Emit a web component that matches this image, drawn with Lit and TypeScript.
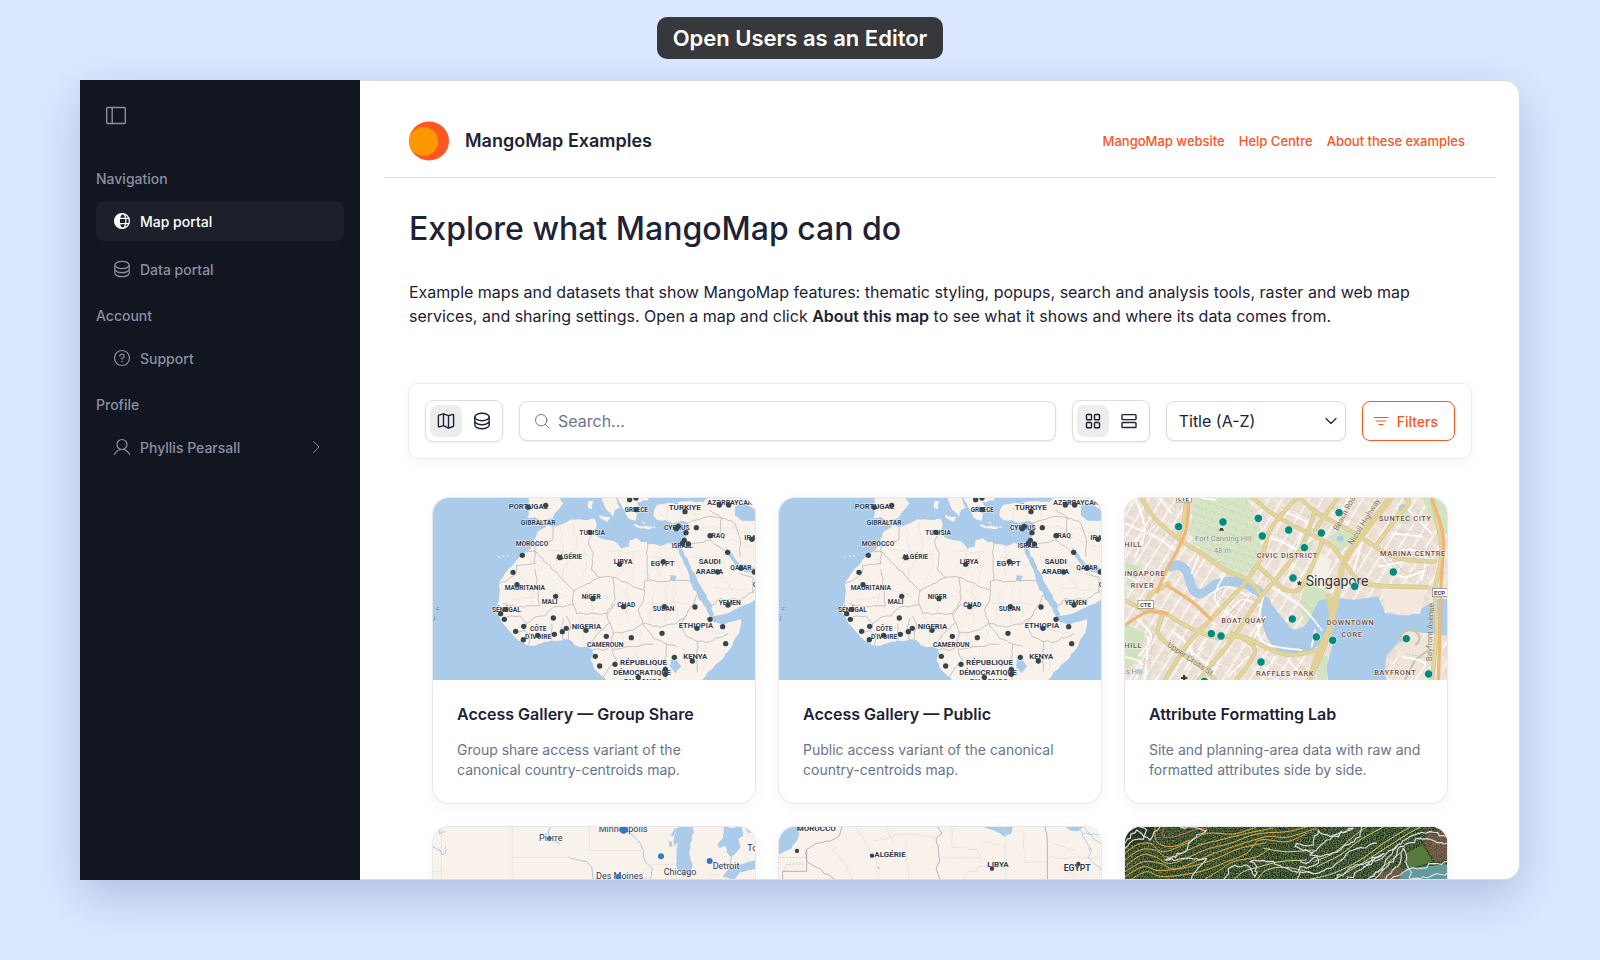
import { LitElement, html, css, svg, nothing } from "lit";
import { customElement, property, state } from "lit/decorators.js";
import { classMap } from "lit/directives/class-map.js";

/* ---------- geometry helpers ---------- */

type Pt = [number, number];

const parse = (s: string): Pt[] => s.trim().split(/\s+/).map((p) => p.split(",").map(Number) as Pt);

/** Subdivides a polyline and nudges the new points, so that coasts and borders look natural. */
function rough(s: string, amp = 3, closed = false, step = 10): string {
  const pts = parse(s);
  if (closed) pts.push(pts[0]);
  let seed = pts.length * 37 + pts[0][0] * 13 + pts[0][1];
  const rnd = () => {
    seed = (seed * 9301 + 49297) % 233280;
    return seed / 233280 - 0.5;
  };
  const out: string[] = [];
  for (let i = 0; i < pts.length - 1; i++) {
    const [x0, y0] = pts[i];
    const [x1, y1] = pts[i + 1];
    out.push(`${x0},${y0}`);
    const n = Math.floor(Math.hypot(x1 - x0, y1 - y0) / step);
    for (let k = 1; k < n; k++) {
      const t = k / n;
      out.push(`${(x0 + (x1 - x0) * t + rnd() * amp * 2).toFixed(1)},${(y0 + (y1 - y0) * t + rnd() * amp * 2).toFixed(1)}`);
    }
  }
  if (!closed) out.push(pts[pts.length - 1].join(","));
  return "M" + out.join("L") + (closed ? "Z" : "");
}

/** Smooth curve through the given points. */
function curve(s: string): string {
  const p = parse(s);
  let d = `M${p[0]}`;
  for (let i = 0; i < p.length - 1; i++) {
    const a = p[Math.max(i - 1, 0)], b = p[i], c = p[i + 1], e = p[Math.min(i + 2, p.length - 1)];
    d += `C${b[0] + (c[0] - a[0]) / 6},${b[1] + (c[1] - a[1]) / 6} ${c[0] - (e[0] - b[0]) / 6},${c[1] - (e[1] - b[1]) / 6} ${c[0]},${c[1]}`;
  }
  return d;
}

/* ---------- icons ---------- */

const icons = {
  panel: svg`<rect x=".7" y="3.500" width="18.600" height="16" rx="1"/><path d="M6.200 3.500v16"/>`,
  globe: svg`<circle cx="10" cy="10" r="7.4"/><ellipse cx="10.6" cy="10" rx="3.3" ry="7.4"/><path d="M7 7.4h10M7 12.6h10"/><path fill="currentColor" stroke="none" d="M10 2.4a7.6 7.6 0 0 0 0 15.2C6.4 14 6.4 6 10 2.4z"/>`,
  database: svg`<ellipse cx="10" cy="6" rx="7.2" ry="3.7"/><path d="M2.8 6v4c0 2 3.2 3.7 7.2 3.7s7.200-1.700 7.200-3.700V6M2.800 10v4c0 2 3.200 3.700 7.200 3.700s7.200-1.700 7.200-3.700v-4"/>`,
  help: svg`<circle cx="10" cy="10" r="7.500"/><path d="M7.800 8.200c0-1.200 1-2 2.200-2s2.200.8 2.200 2c0 1.100-.9 1.800-2.200 2v1.100"/><circle cx="10" cy="13.600" r=".6" fill="currentColor" stroke-width=".4"/>`,
  user: svg`<circle cx="10" cy="7.500" r="5"/><path d="M2.300 17.500c1.600-3 4.400-5 7.700-5s6.100 2 7.700 5"/>`,
  right: svg`<path d="M7.500 4.500l5.500 5.500-5.500 5.500"/>`,
  down: svg`<path d="M5 7.500l5 5 5-5"/>`,
  map: svg`<path d="M7.500 14.600l-4.300 1.300a.6.6 0 0 1-.8-.6V4.900c0-.3.200-.6.500-.7L7.500 2.800l5 1.900 4.300-1.300c.4-.1.800.2.800.6v10.800c0 .3-.2.600-.5.700l-4.600 1.700zM7.500 2.800v11.800M12.500 4.700v12.400"/>`,
  search: svg`<circle cx="9.200" cy="9.200" r="5.700"/><path d="M13.300 13.300l3.700 3.700"/>`,
  grid: svg`<rect x="3.500" y="3.500" width="5" height="5.200" rx=".8"/><rect x="11.500" y="3.500" width="5" height="5.200" rx=".8"/><rect x="3.500" y="11.500" width="5" height="5.200" rx=".8"/><rect x="11.500" y="11.500" width="5" height="5.200" rx=".8"/>`,
  rows: svg`<rect x="3" y="3.600" width="14" height="5" rx=".8"/><rect x="3" y="11.500" width="14" height="5" rx=".8"/>`,
  filter: svg`<path d="M3 6.500h14M5.300 10h9.400M8 13.500h4"/>`,
};

const icon = (name: keyof typeof icons, width = 1.2, size = 20) => svg`
  <svg class="icon" viewBox="0 0 ${size} ${size}" width=${size} height=${size}
    fill="none" stroke="currentColor" stroke-width=${width} stroke-linecap="round" stroke-linejoin="round" aria-hidden="true">${icons[name]}</svg>`;

/* ---------- map drawings ---------- */

const label = (x: number, y: number, size: number, text: string, weight = 700) =>
  svg`<text class="country" x=${x} y=${y} font-size=${size} font-weight=${weight}>${text}</text>`;

const dots = (s: string, r: number, fill: string, ring = 0) =>
  parse(s).map(([x, y]) => svg`<circle cx=${x} cy=${y} r=${r} fill=${fill} stroke="#fff" stroke-width=${ring}/>`);

const lines = (list: string[], amp: number) => list.map((s) => rough(s, amp)).join("");

const africaLand = [
  // African mainland
  "384,104 398,112 425,103 455,88 490,90 526,88 530,103 521,122 535,142 562,150 592,160 604,176 628,170 630,150 650,144 664,156 700,162 722,168 745,158 768,166 778,192 790,214 804,245 812,280 832,315 850,345 868,375 880,396 915,402 962,388 960,418 938,465 902,512 862,548 840,575 560,575 546,558 520,532 512,512 520,492 516,478 500,470 482,472 464,466 450,450 430,447 410,453 385,455 355,462 330,467 310,458 285,442 266,420 250,402 240,384 226,358 236,335 240,300 236,283 250,260 268,234 290,210 312,190 335,172 343,148 352,125",
  // Levant, Arabia and Iran
  "702,60 712,44 745,38 790,34 870,22 1010,22 1010,328 960,352 905,374 880,378 876,346 852,306 832,272 812,228 790,184 782,166 796,148 800,120 803,98 786,92 760,100 735,90 712,90 700,78",
  // Iberia
  "324,20 420,20 430,40 412,62 398,84 366,92 345,82 322,84 328,50",
  // Italy and Greece
  "545,20 580,20 600,52 585,60 580,82 560,60", "590,20 690,20 682,32 650,36 655,60 648,92 624,84 606,52",
  "536,74 572,82 562,96 540,84", "506,32 520,34 516,58 504,54", "640,104 700,112 690,118 650,112", "766,108 790,104 780,120",
];
const africaWater = [
  "916,172 928,182 940,196 960,222 986,226 1010,240 1010,250 975,246 946,226 924,194",
  "945,50 975,40 1010,60 1010,92 970,94 944,76", "715,20 865,20 850,36 800,32 745,36",
  "752,508 772,512 784,528 766,550 750,530", "752,255 770,258 765,272 750,270",
];
const africaBorders = [
  "400,112 398,150 345,165 345,184 320,186", "345,184 345,222 290,226 285,255 236,283", "345,184 460,300 462,305",
  "345,238 358,348 300,350 250,342", "521,122 505,155 520,190 515,240 540,262 578,262 670,300", "540,262 462,302 460,345 400,352 375,378 350,380",
  "682,155 682,272 672,274 672,330 655,360 668,400", "682,272 812,274", "578,262 585,330 560,370 470,372 460,345", "585,340 560,372 570,398 545,420 520,450 500,468",
  "570,398 580,430 640,420 668,400 720,412 770,400", "668,400 700,445 740,462 770,470", "580,430 572,470 580,478 630,470 700,462", "440,378 450,400 445,448",
  "430,385 425,410 428,447", "395,400 392,455", "350,380 320,400 312,420 330,440 326,466", "262,380 300,378 320,400", "280,430 312,420",
  "770,400 800,375 825,330 830,315", "800,375 780,400 800,440 832,455 870,455 925,430", "832,455 832,545", "740,462 735,520 740,575", "516,480 560,478 572,470",
  "575,478 590,510 560,545 550,560", "800,100 860,80 905,84 900,130 870,150 815,162", "870,150 920,185", "905,84 945,100 960,145 960,200", "876,346 900,325 960,330 1005,300",
  "870,60 905,84", "780,166 815,162", "960,250 1000,262 1000,310",
];
const africaRegions = [
  "420,110 430,180 400,240", "460,95 470,160 440,230 420,270", "490,180 500,230 480,270", "560,180 620,190 660,180", "600,190 610,240 590,260", "640,190 640,280",
  "700,200 760,210 780,240", "720,170 715,260", "380,180 460,190 510,200", "300,250 340,300 330,345", "370,300 440,320", "480,310 570,320", "500,290 520,370",
  "600,300 650,340 600,380", "620,280 625,400", "700,300 690,400", "740,280 735,400", "680,340 800,340", "760,290 770,380", "480,380 490,460", "520,380 525,440",
  "600,430 620,470", "660,420 665,465", "470,420 560,420", "590,500 720,510", "650,480 660,560", "790,470 800,540", "860,460 850,540", "830,420 910,430", "860,200 900,260 940,300",
  "820,200 900,210 930,250", "880,290 980,300", "830,110 890,115", "920,110 990,130", "930,150 1000,170", "740,50 745,95", "780,50 785,90", "820,45 830,90", "350,400 400,420", "270,330 340,325",
];

const africa = svg`
  <svg class="map" viewBox="39 24 966 546" preserveAspectRatio="xMidYMid slice" role="img" aria-label="Map of Africa">
    <rect x="39" y="24" width="966" height="546" fill="#abcbeb"/>
    <path d=${africaLand.map((s) => rough(s, 3, true)).join("")} fill="#f8f2ea"/>
    <path d=${africaWater.map((s) => rough(s, 2, true)).join("")} fill="#abcbeb"/>
    <path d=${lines(africaRegions, 5)} fill="none" stroke="#e4dfd9" stroke-width="2"/>
    <path d=${lines(africaBorders, 3)} fill="none" stroke="#b3b0b8" stroke-width="2.200"/>
    <path d="M700,110l6,3M690,108l5,6M668,96l6,4M235,200l4,2M248,198l5,2M262,196l4,3" stroke="#f8f2ea" stroke-width="4"/>
    <g fill="#3a70c4" font-size="17" font-style="italic"><text x="48" y="360">c</text><text x="40" y="389">)</text></g>
    ${label(266, 56, 23, "PORTUGAL")}${label(302, 104, 20, "GIBRALTAR")}${label(287, 168, 20, "MOROCCO")}${label(478, 134, 20, "TUNISIA")}
    ${label(408, 208, 20, "ALGÉRIE")}${label(581, 222, 21, "LIBYA")}${label(692, 229, 23, "EGYPT")}${label(614, 65, 19, "GREECE")}
    ${label(746, 61, 24, "TÜRKIYE")}${label(862, 45, 21, "AZƏRBAYCAN")}${label(732, 120, 20, "CYPRUS")}${label(869, 144, 20, "IRAQ")}
    ${label(755, 173, 19, "ISRAEL")}${label(973, 150, 22, "IRAN")}${label(836, 222, 23, "SAUDI")}${label(827, 252, 23, "ARABIA")}${label(931, 240, 20, "QATAR")}
    ${label(254, 299, 20, "MAURITANIA")}${label(365, 343, 20, "MALI")}${label(485, 327, 20, "NIGER")}${label(592, 351, 20, "CHAD")}
    ${label(698, 362, 20, "SUDAN")}${label(896, 344, 20, "YEMEN")}${label(216, 365, 20, "SÉNÉGAL")}${label(455, 418, 23, "NIGERIA")}
    ${label(330, 423, 20, "CÔTE")}${label(315, 448, 20, "D'IVOIRE")}${label(776, 413, 23, "ETHIOPIA")}${label(501, 472, 20, "CAMEROUN")}
    ${label(790, 506, 23, "KENYA")}${label(600, 525, 24, "RÉPUBLIQUE")}${label(580, 555, 23, "DÉMOCRATIQUE")}${label(612, 583, 23, "DU CONGO")}${label(998, 290, 20, "OMAN")}
    ${dots("325,52 377,46 629,29 648,24 649,59 795,65 898,45 926,45 775,109 769,116 829,113 798,128 510,127 870,137 793,151 787,160 805,162 996,148 307,196 420,203 923,187 730,215 599,223 893,246 963,235 1003,246 279,247 291,284 407,319 519,326 611,350 733,350 825,351 924,345 257,358 242,371 253,388 400,384 870,388 311,409 287,424 439,415 427,425 403,433 353,436 498,421 831,415 908,410 310,449 559,439 634,443 726,430 917,461 526,499 539,528 585,523 763,502 817,513 736,538 736,553 655,562", 8, "#36464f")}
  </svg>`;

const sgRoads = [
  "80,20 100,60 140,105 195,150 260,190 330,240 400,270 440,315", "215,20 205,100 190,140", "560,10 470,110 440,200 380,290 300,375 220,460 150,570",
  "410,20 470,70 540,110 640,160 690,220 720,260 770,285 940,292", "550,20 610,70 720,130 780,170", "830,20 760,110 690,210 670,280 650,400 620,490 580,580",
  "30,330 90,360 150,370 200,400 290,440 380,440 470,480 530,495 610,480", "600,60 560,170 480,270 430,330 350,450 250,570", "90,345 110,310 160,280", "670,20 600,120", "140,380 130,430 170,470 260,530 300,570",
  "620,160 560,290 510,300", "510,300 430,230", "780,170 840,90 880,40 870,20", "780,170 850,205 960,215", "950,20 980,180 960,300 965,420 950,575", "350,430 420,480 360,575",
];
const sgStreets = [
  "30,100 120,140 180,180", "60,20 90,120 60,200", "130,20 170,70", "40,260 130,310", "330,250 300,330 380,400", "250,340 330,290 400,320", "320,390 380,330 440,350", "430,130 510,160 560,190", "480,80 440,160",
  "560,130 530,230", "500,60 580,100 620,140", "640,60 700,100", "700,20 660,120", "740,160 710,260", "800,200 860,260 930,240", "790,230 870,215", "830,130 920,140", "860,180 930,190 920,270", "880,60 950,130",
  "170,420 230,480 210,540", "60,380 110,440 70,500", "100,440 90,570", "220,480 300,540", "300,400 250,480", "330,460 300,540", "400,500 340,560", "440,520 480,570", "520,510 560,560", "480,500 440,560", "450,300 430,400 450,460 560,480",
  "470,290 560,350 620,420", "600,420 590,470", "860,500 930,520 900,570", "30,500 80,520 60,570", "120,110 60,150", "250,200 230,250", "450,380 420,440", "240,20 300,30",
];
const place = (x: number, y: number, text: string, size = 22) => svg`<text class="place" x=${x} y=${y} font-size=${size}>${text}</text>`;

const singapore = svg`
  <svg class="map" viewBox="30 24 966 546" preserveAspectRatio="xMidYMid slice" role="img" aria-label="Map of Singapore">
    <defs>
      <pattern id="blocks" width="46" height="34" patternUnits="userSpaceOnUse" patternTransform="rotate(-58)">
        <rect width="46" height="34" fill="#f0e7dd"/><rect x="4" y="4" width="18" height="11" fill="#e8dcd3"/><rect x="26" y="3" width="15" height="20" fill="#e9ddd5"/><rect x="5" y="19" width="16" height="10" fill="#e9dcd3"/>
        <path d="M0 32h46" stroke="#fff" stroke-width="3"/><path d="M24 0v34" stroke="#cfbfae" stroke-width="1.500" stroke-dasharray="4 3"/>
      </pattern>
      <pattern id="trees" width="26" height="22" patternUnits="userSpaceOnUse" patternTransform="rotate(20)">
        <rect width="26" height="22" fill="#d6e6c6"/><path d="M2 8q8-8 14 0t10 6" fill="none" stroke="#c2b99b" stroke-width="2" stroke-dasharray="4 3"/><circle cx="18" cy="5" r="2.500" fill="#c2dbb0"/>
      </pattern>
    </defs>
    <rect x="30" y="24" width="966" height="546" fill="url(#blocks)"/>
    <path d=${rough("235,24 400,24 430,90 445,170 410,240 370,262 310,225 250,170 225,130", 4, true)} fill="url(#trees)"/>
    <path d="M640,140L700,110 725,150 670,185zM580,250l55,20-5,60-55,70-25,-50zM30,400l60,30-20,80-40,30zM610,490l30,10-5,70h-30zM920,24h76v110l-40-30zM840,60h50v40h-40zM560,170l35-20-10,40zM30,220l50,10-40,60z" fill="#d2e3c0"/>
    <path d="M600,180l50,30-25,90-50-30z" fill="#f6efe6"/>
    <g fill="#abcbeb">
      <path d=${curve("160,232 190,225 215,245 235,300 265,310 310,280 380,278 440,310") } fill="none" stroke="#abcbeb" stroke-width="28"/>
      <path d="M440,318q20-5 30,25l60,75q30,5 50-25l30-60 45-12 60,8 75-10 20,50 70,8 90-50h30v110l-90,-10q-40-10-60,30l-35,40q-10,40,0,75H640l-5-40 25-95-50,30q-80,50-140,0-40-60-30-139z"/>
      <path d="M850,55a14 12 0 1 0 28 0 14 12 0 1 0-28 0M665,140l18-5 4,16-18,6zM55,240l12,8-6,20z"/>
    </g>
    <path d="M800,298h130l-5,40-10,35-100-8z" fill="#f3e9df"/>
    <path d="M860,455a28 24 0 1 1 40 10l20-20 60-10v135H840z" fill="#efe5db"/>
    <path d="M860,455a28 24 0 1 1 40 10M870,570l30-60 40-30" fill="none" stroke="#c5c99f" stroke-width="6"/>
    <path d=${sgStreets.map(curve).join("")} fill="none" stroke="#fff" stroke-width="5" stroke-linecap="round"/>
    <path d=${lines(sgStreets.map((s) => parse(s).map(([x, y]) => `${x + 14},${y - 9}`).join(" ")), 3)} fill="none" stroke="#c8b7a4" stroke-width="2" stroke-dasharray="5 4"/>
    <path d=${sgRoads.map(curve).join("")} fill="none" stroke="#d3c289" stroke-width="13" stroke-linecap="round"/>
    <path d=${sgRoads.map(curve).join("")} fill="none" stroke="#e3d49b" stroke-width="10" stroke-linecap="round"/>
    <path d=${curve("640,310 650,400 610,490 580,580")} fill="none" stroke="#e1d196" stroke-width="18"/>
    <path d=${curve("830,20 760,110 690,210 665,320 645,410")} fill="none" stroke="#e1d196" stroke-width="20"/>
    <path d=${curve("222,24 210,130 150,250 125,310") + curve("30,405 100,365 160,372") + curve("950,24 985,140 978,280 975,420 970,575") + curve("155,285 230,335 290,390")} fill="none" stroke="#eeb878" stroke-width="10"/>
    <g fill="#fff" stroke="#7b7b78" stroke-width="2"><rect x="185" y="12" width="44" height="24"/><rect x="69" y="331" width="46" height="25"/><rect x="952" y="295" width="46" height="25"/></g>
    <g font-size="18" font-weight="700" fill="#444"><text x="189" y="32">CTE</text><text x="75" y="350">CTE</text><text x="957" y="314">ECP</text></g>
    ${place(28, 170, "HILL")}${place(28, 257, "INGAPORE")}${place(47, 293, "RIVER")}${place(425, 203, "CIVIC DISTRICT")}${place(792, 92, "SUNTEC CITY")}
    ${place(795, 198, "MARINA CENTRE")}${place(319, 398, "BOAT QUAY")}${place(635, 404, "DOWNTOWN")}${place(679, 440, "CORE")}${place(28, 474, "HILL")}${place(423, 557, "RAFFLES PARK")}${place(778, 556, "BAYFRONT")}
    <g class="soft" font-size="23"><text x="240" y="154">Fort Canning Hill</text><text x="296" y="188">48 m</text><text x="32" y="551">s Hill</text></g>
    <g class="road" font-size="24"><text transform="translate(712 166) rotate(-58)">Nicoll Highway</text><text transform="translate(668 124) rotate(-62)">Beach Road</text><text transform="translate(155 468) rotate(34)">Upper Cross St.</text><text transform="translate(950 514) rotate(-88)">Bayfront Avenue</text></g>
    <text class="city" x="572" y="287" font-size="42">Singapore</text>
    <path d="M553,271l2.500,5.500 6,.5-4.500,4 1.500,6-5.500-3-5.500,3 1.500-6-4.500-4 6-.5zM312,122l4-8h7l4,8zM198,561h6v-6h7v6h6v6h-6v6h-7v-6h-6z" fill="#3c3c3c"/>
    ${dots("191,110 324,96 430,85 442,138 521,120 619,129 672,68 568,173 534,264 719,289 835,246 532,387 289,431 318,438 604,441 653,451 874,446 438,516 941,552 268,574", 12.5, "#038a7c", 2)}
  </svg>`;

const midwest = svg`
  <svg class="map" viewBox="9 9 966 546" preserveAspectRatio="xMidYMid slice" role="img" aria-label="Map of the American Midwest">
    <rect x="9" y="9" width="966" height="546" fill="#f8f2ea"/>
    <path d="M34,9V300M9,142H34M247,9V300M247,100H415M478,9V79H634M660,121H750M600,165l60-4M830,152h50" fill="none" stroke="#ddd6d0" stroke-width="2" stroke-dasharray="4 2"/>
    <path d=${rough("362,9 355,30 370,48 390,58", 3) + rough("415,98 445,108 470,112 485,130 490,165 510,300", 3) + rough("590,22 625,50 640,80 642,105 668,135 665,155 640,200", 3) + rough("9,68 30,78 36,92 46,88 46,68", 3) + rough("30,9 28,30 44,22", 2) + rough("905,90 900,125", 1)} fill="none" stroke="#a9c8e8" stroke-width="3"/>
    <g fill="#abcbeb">
      <path d=${rough("745,9 788,9 792,24 780,60 778,90 788,120 782,150 760,160 742,135 740,90 742,55 730,70 735,30", 3, true)}/>
      <path d=${rough("880,9 935,9 940,35 925,45 932,70 915,90 903,100 890,85 885,65 868,72 862,62 878,45", 3, true)}/>
      <path d=${rough("900,130 945,118 975,108 975,135 930,145 915,165 878,158 885,148", 2, true)}/>
      <path d="M717,50l8,3 2,14-8,2zM722,35l12-22h6l-10,24zM944,9h31v14l-20,4zM682,36l6,3M893,120l12-2v12l-8,4z"/>
    </g>
    <g class="town" font-size="27"><text x="506" y="24">Minneapolis</text><text x="327" y="50">Pierre</text><text x="848" y="135">Detroit</text><text x="701" y="154">Chicago</text><text x="498" y="166">Des Moines</text><text x="952" y="80">Toronto</text></g>
    ${dots("581,18", 11, "#3377cb")}${dots("359,43", 6, "#3377cb")}${dots("693,97 839,111 565,159", 9, "#3377cb")}
  </svg>`;

const sahara = svg`
  <svg class="map" viewBox="9 9 966 546" preserveAspectRatio="xMidYMid slice" role="img" aria-label="Map of North Africa">
    <rect x="9" y="9" width="966" height="546" fill="#f8f2ea"/>
    <g fill="#abcbeb">
      <path d=${rough("5,5 72,5 68,40 45,75 5,94", 2, true)}/><path d=${rough("612,5 712,5 706,30 685,38 660,22", 2, true)}/><path d=${rough("858,5 928,5 905,22 880,18", 2, true)}/>
      <path d="M303,125l8,4-2,10zM937,70l5,4-1,12z"/>
    </g>
    <path d=${lines(["240,9 270,60 300,95", "300,95 310,200", "390,60 400,200", "150,60 200,110 230,165", "290,50 390,30 480,40", "525,9 530,70 600,75 620,110", "500,100 610,100", "560,200 570,150 640,120 688,110", "688,9 688,200", "740,20 745,115 812,115", "830,60 900,80", "818,100 970,100", "330,9 350,60", "620,50 690,70", "850,130 900,160", "30,122 80,118"], 4)} fill="none" stroke="#e2ddd6" stroke-width="2"/>
    <path d=${rough("198,9 190,35 160,52 120,58 92,76 92,110 175,165", 3) + rough("485,9 498,28 480,45 488,85 492,110 480,135 492,165", 3) + rough("808,9 814,60", 3) + "M814,60V200M92,76V142H20V200"} fill="none" stroke="#aaa6b2" stroke-width="2.500"/>
    <path d="M9,100H90M22,142l12-22h50" fill="none" stroke="#c9c4c6" stroke-width="2" stroke-dasharray="6 4"/>
    <path d=${rough("905,9 930,50 945,75 940,105 955,120 975,140", 4) + rough("925,9 950,40 975,60", 4) + rough("920,30 975,30", 4)} fill="none" stroke="#a9c8e8" stroke-width="2.500"/>
    ${label(62, 22, 24, "MOROCCO")}${label(295, 99, 24, "ALGÉRIE")}${label(634, 128, 24, "LIBYA")}${label(863, 142, 26, "EGYPT")}
    ${dots("63,81 288,95 648,134 907,120", 6.5, "#33424f")}
  </svg>`;

const amber = [
  "75,520 110,495 150,490 190,515 260,490 320,460 400,462 470,441", "75,540 120,510 165,510 210,532 300,495 360,480 440,460 520,444", "75,560 125,525 165,530 215,550 320,508 390,490 470,462 560,455 620,441",
  "75,575 130,545 180,550 230,566 330,525 400,500 500,470 560,472 650,445", "75,590 130,560 180,572 270,560 350,535 420,505 500,488", "90,600 140,575 190,590 300,575 380,545 440,520 480,480 560,485 620,460", "165,441 170,485 215,500 270,480", "310,600 360,570 400,545 470,530 510,505",
];
const lime = ["400,600 430,575 480,560 540,545 620,540", "490,505 560,515 640,510", "470,600 500,570 560,562 640,580", "650,560 720,525 780,480 850,441", "640,545 700,520 760,470 800,441", "620,600 700,580 780,540 850,490 930,441", "700,600 770,560 840,515 910,470 960,441", "800,600 850,560 900,520"];
const pale = [
  "75,505 100,480 130,478 140,450 120,441", "75,490 110,450 150,480 180,441", "240,441 320,450 290,465 245,520 195,540 320,535 290,570 275,600", "370,600 395,560 440,555 465,590 470,560 450,545 520,545 590,575",
  "590,600 600,575 650,580 700,560 760,510 830,490", "640,520 585,500 590,490 640,495 655,450 690,470 760,445 680,480 630,525 660,530", "600,540 620,550 650,530 655,550 620,565 600,560 590,580",
  "740,600 780,570 820,540 852,520 840,530 760,560 700,600", "660,530 720,510 780,470 785,441", "800,600 850,560 880,510 930,470 990,455 1040,470", "820,600 880,545 900,500 960,475 1040,490", "850,600 900,550 910,505 935,600", "870,600 920,570 1041,545", "900,490 850,530 790,560", "930,600 1041,580",
];

const terrain = svg`
  <svg class="map" viewBox="75 441 966 546" preserveAspectRatio="xMidYMid slice" role="img" aria-label="Satellite map with contour lines">
    <defs>
      <filter id="canopy" x="0" y="0" width="100%" height="100%" color-interpolation-filters="sRGB"><feTurbulence type="fractalNoise" baseFrequency=".25" numOctaves="3" seed="4"/><feColorMatrix values=".7 0 0 0 -.1  .7 0 0 0 -.02  .6 0 0 0 -.1  0 0 0 0 1"/></filter>
    </defs>
    <rect x="75" y="441" width="966" height="546" fill="#3f5535"/>
    <rect x="75" y="441" width="966" height="546" filter="url(#canopy)"/>
    <path d="M75,441h110l-40,40-70,20z" fill="#1d2a1c" opacity=".6"/>
    <path d="M918,520l50-25 30,50-78,22z" fill="#557a3c"/>
    <path d="M890,600l30-35 121-12v47z" fill="#639a9a"/>
    <path d="M985,450l56,5v85l-35,5-35-55zM830,600l20-25 60-15-10,40z" fill="#8c5f52" opacity=".6"/>
    <g fill="none" stroke-width="3" stroke-linejoin="round">
      <path d=${amber.map(curve).join("")} stroke="#e2b045"/>
      <path d=${curve("190,441 192,470 230,468 290,448 320,446")} stroke="#e0703a"/>
      <path d=${lime.map(curve).join("")} stroke="#d5dc8c"/>
      <path d=${lines(pale, 5)} stroke="#dfdde6" stroke-width="3.500"/>
    </g>
  </svg>`;

/* ---------- components ---------- */

const base = css`
  *, *::before, *::after { box-sizing: border-box; }
  :host { box-sizing: border-box; font-family: Inter, "Liberation Sans", sans-serif; color: #1e2235; }
  button, input, select { font: inherit; color: inherit; }
  a { color: inherit; text-decoration: none; }
  .icon { display: block; flex: none; }
`;

@customElement("side-nav")
export class SideNav extends LitElement {
  static styles = [base, css`
    :host { display: block; flex: none; width: 280px; padding: 24px 16px; background: #121620; color: #8a90a2; font-size: 14px; font-weight: 500; line-height: 21px; }
    .toggle { display: block; margin: 0 0 42px 10px; padding: 0; border: 0; background: none; }
    .group { margin-bottom: 16px; }
    .title { margin: 0 0 12px; font: inherit; }
    ul { display: grid; gap: 8px; margin: 0; padding: 0; list-style: none; }
    .item { display: flex; align-items: center; gap: 8px; height: 40px; padding: 0 18px 0 16px; border-radius: 8px; }
    .active { background: #1d202a; color: #fff; }
    .more { margin-left: auto; }
  `];

  private groups = [
    { title: "Navigation", items: [{ icon: "globe", text: "Map portal", active: true }, { icon: "database", text: "Data portal" }] },
    { title: "Account", items: [{ icon: "help", text: "Support" }] },
    { title: "Profile", items: [{ icon: "user", text: "Phyllis Pearsall", more: true }] },
  ] as { title: string; items: { icon: keyof typeof icons; text: string; active?: boolean; more?: boolean }[] }[];

  render() {
    return html`
      <button class="toggle" aria-label="Toggle sidebar">${icon("panel", 1.4, 22)}</button>
      <nav>
        ${this.groups.map((g) => html`
          <section class="group">
            <h2 class="title">${g.title}</h2>
            <ul>${g.items.map((i) => html`
              <li><a href="#" class=${classMap({ item: true, active: !!i.active })}>
                ${icon(i.icon)}<span>${i.text}</span>${i.more ? html`<span class="more">${icon("right", 1)}</span>` : nothing}
              </a></li>`)}</ul>
          </section>`)}
      </nav>`;
  }
}

@customElement("map-toolbar")
export class MapToolbar extends LitElement {
  @state() private kind = "map";
  @state() private view = "grid";

  static styles = [base, css`
    :host { display: flex; align-items: center; gap: 16px; padding: 16px; border-radius: 8px; background: #fff; box-shadow: 0 0 0 1px #ececee, 0 4px 16px rgba(20, 24, 40, .05); font-size: 16px; }
    .switch { display: flex; gap: 4px; padding: 4px; border: 1px solid #dcdce3; border-radius: 8px; box-shadow: 0 1px 2px rgba(20, 24, 40, .08); }
    .switch button { display: grid; place-items: center; width: 32px; height: 32px; padding: 0; border: 0; border-radius: 8px; background: none; }
    .switch .on { background: #ededee; }
    .field { height: 40px; border: 1px solid #dcdce3; border-radius: 8px; background: #fff; box-shadow: 0 1px 2px rgba(20, 24, 40, .08); }
    .search { display: flex; flex: 1; align-items: center; gap: 6px; min-width: 0; padding: 0 12px; color: #737785; }
    .search input { flex: 1; min-width: 0; padding: 0; border: 0; outline: 0; background: none; color: #1e2235; }
    .search input::placeholder { color: #6b7689; opacity: 1; }
    .sort { display: grid; align-items: center; width: 180px; }
    .sort > * { grid-area: 1 / 1; }
    .sort select { width: 100%; height: 100%; padding: 0 36px 0 12px; border: 0; border-radius: 8px; outline: 0; background: none; appearance: none; }
    .sort .icon { justify-self: end; margin-right: 4px; pointer-events: none; }
    .filters { display: flex; align-items: center; gap: 6px; height: 40px; padding: 0 16px 0 8px; border: 1px solid #fc5523; border-radius: 8px; background: #fff; color: #fc5523; font-size: 14px; font-weight: 500; }
  `];

  render() {
    const btn = (group: "kind" | "view", value: string, name: keyof typeof icons, text: string) => html`
      <button class=${classMap({ on: this[group] === value })} aria-label=${text} aria-pressed=${this[group] === value}
        @click=${() => (this[group] = value)}>${icon(name, 1.4)}</button>`;
    return html`
      <div class="switch">${btn("kind", "map", "map", "Maps")}${btn("kind", "data", "database", "Datasets")}</div>
      <label class="field search">${icon("search", 1)}<input type="text" aria-label="Search" placeholder="Search..." /></label>
      <div class="switch">${btn("view", "grid", "grid", "Grid view")}${btn("view", "rows", "rows", "List view")}</div>
      <label class="field sort"><select aria-label="Sort by"><option>Title (A-Z)</option><option>Title (Z-A)</option></select>${icon("down", 1.2)}</label>
      <button class="filters">${icon("filter")}Filters</button>`;
  }
}

@customElement("map-card")
export class MapCard extends LitElement {
  @property() heading = "";
  @property() text = "";
  @property({ attribute: false }) picture: unknown = nothing;

  static styles = [base, css`
    :host { display: block; overflow: hidden; border-radius: 16px; background: #fff; box-shadow: 0 0 0 1px #e8e8ea, 0 4px 16px rgba(20, 24, 40, .05); }
    .map { display: block; width: 100%; aspect-ratio: 161 / 91; font-family: Roboto, sans-serif; }
    .country { fill: #343b50; stroke: #fff; stroke-width: 3px; stroke-opacity: .8; paint-order: stroke; }
    .place { fill: #74493f; stroke: #fff; stroke-width: 3px; stroke-opacity: .7; paint-order: stroke; font-weight: 500; letter-spacing: 2px; }
    .soft { fill: #8390a0; stroke: #fff; stroke-width: 2px; stroke-opacity: .6; paint-order: stroke; }
    .road { fill: #80765a; stroke: #fff; stroke-width: 2px; stroke-opacity: .5; paint-order: stroke; }
    .city, .town { fill: #333; stroke: #fff; stroke-width: 3px; stroke-opacity: .7; paint-order: stroke; }
    .town { fill: #33384a; }
    .body { display: grid; gap: 16px; padding: 24px 24px 23px; }
    h3 { margin: 0; font-size: 16px; font-weight: 600; line-height: 20px; }
    p { margin: 0; color: #68748a; font-size: 14px; line-height: 20px; }
  `];

  render() {
    return html`${this.picture}
      ${this.heading ? html`<div class="body"><h3>${this.heading}</h3><p>${this.text}</p></div>` : nothing}`;
  }
}

@customElement("app-root")
export class AppRoot extends LitElement {
  private cards = [
    { title: "Access Gallery — Group Share", text: "Group share access variant of the canonical country-centroids map.", picture: africa },
    { title: "Access Gallery — Public", text: "Public access variant of the canonical country-centroids map.", picture: africa },
    { title: "Attribute Formatting Lab", text: "Site and planning-area data with raw and formatted attributes side by side.", picture: singapore },
    { title: "", text: "", picture: midwest },
    { title: "", text: "", picture: sahara },
    { title: "", text: "", picture: terrain },
  ];

  static styles = [base, css`
    :host { display: flex; flex-direction: column; height: 100vh; padding: 0 80px 80px; background: #dce8ff; }
    .caption { display: flex; flex: none; align-items: center; justify-content: center; height: 80px; padding-bottom: 4px; }
    .caption h1 { margin: 0; padding: 7px 16px; border-radius: 10px; background: #37383c; color: #fff; font-size: 22px; font-weight: 600; line-height: 28px; }
    .window { display: flex; flex: 1; min-height: 0; border-radius: 0 16px 16px 0; box-shadow: 0 16px 48px rgba(30, 60, 120, .24); }
    main { flex: 1; min-width: 0; overflow: hidden; padding: 0 24px; border: 1px solid #d8dde6; border-left-color: #fff; border-radius: 0 16px 16px 0; background: #fff; }
    header { display: flex; align-items: center; gap: 16px; height: 97px; padding: 24px 24px 0; border-bottom: 1px solid #dcdcde; }
    .name { font-size: 18px; font-weight: 600; line-height: 24px; }
    .links { display: flex; gap: 14px; margin-left: auto; padding-right: 6px; color: #fc5523; font-size: 13px; font-weight: 500; line-height: 20px; }
    .content { padding: 30px 24px 0; }
    h2 { margin: 0; font-size: 32px; font-weight: 500; line-height: 42px; }
    .intro { margin: 30px 0 56px; font-size: 16px; line-height: 24px; }
    b { font-weight: 600; }
    .cards { display: grid; grid-template-columns: repeat(3, minmax(0, 1fr)); gap: 24px; padding: 40px 24px 0; }
  `];

  render() {
    return html`
      <div class="caption"><h1>Open Users as an Editor</h1></div>
      <div class="window">
        <side-nav></side-nav>
        <main>
          <header>
            <svg class="icon" width="40" height="40" viewBox="0 0 40 40" aria-hidden="true"><ellipse cx="20" cy="20" rx="20" ry="19.500" fill="#ff5722"/><circle cx="14.700" cy="20.500" r="14.500" fill="#ff9800"/></svg>
            <span class="name">MangoMap Examples</span>
            <nav class="links"><a href="#">MangoMap website</a><a href="#">Help Centre</a><a href="#">About these examples</a></nav>
          </header>
          <div class="content">
            <h2>Explore what MangoMap can do</h2>
            <p class="intro">Example maps and datasets that show MangoMap features: thematic styling, popups, search and analysis tools, raster and web map services, and sharing settings. Open a map and click <b>About this map</b> to see what it shows and where its data comes from.</p>
            <map-toolbar></map-toolbar>
            <div class="cards">${this.cards.map((c) => html`<map-card .heading=${c.title} .text=${c.text} .picture=${c.picture}></map-card>`)}</div>
          </div>
        </main>
      </div>`;
  }
}
